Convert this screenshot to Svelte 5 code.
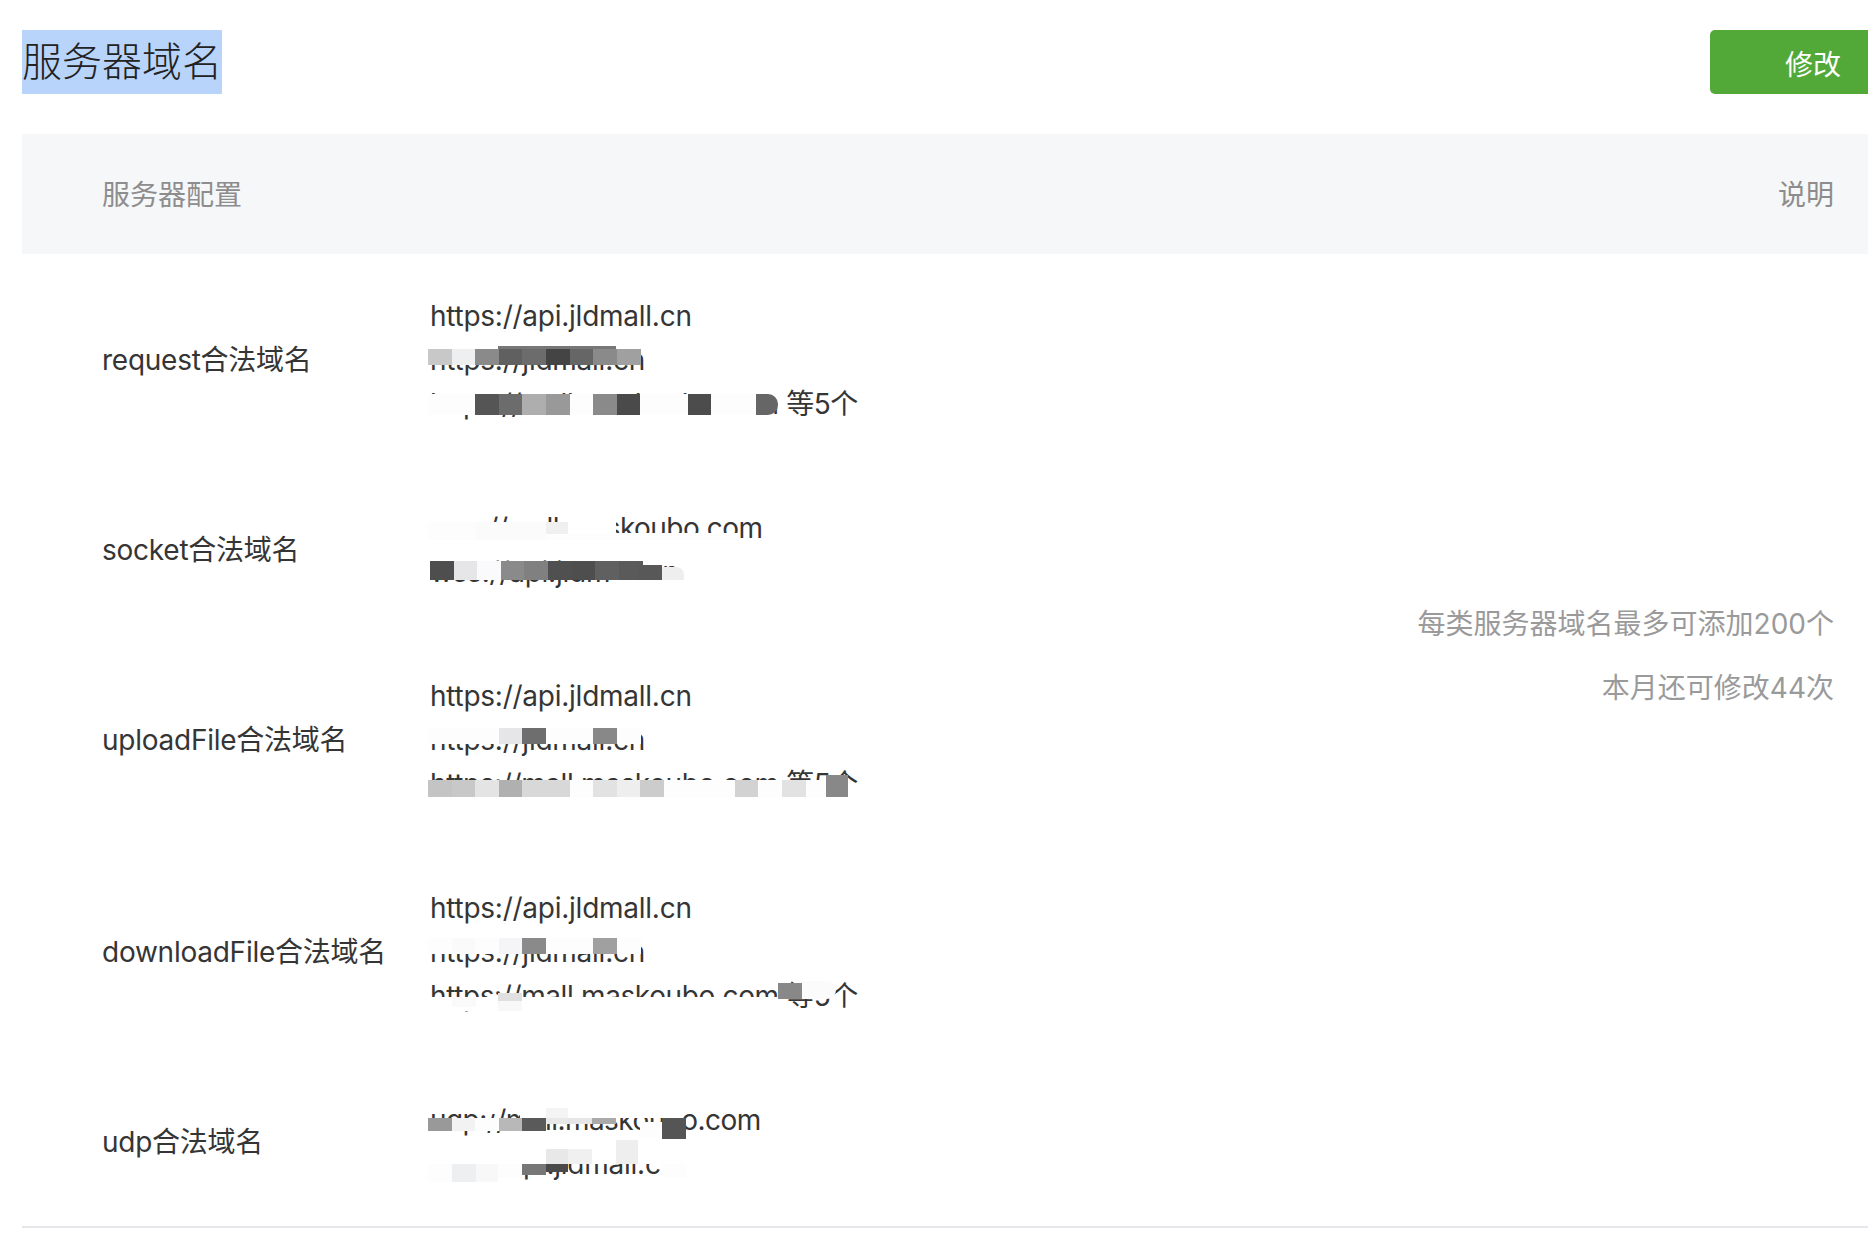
<script>
  const rows = [
    { name: 'request合法域名', urls: ['https://api.jldmall.cn', 'https://jldmall.cn', 'https://mall.maskoubo.com 等5个'] },
    { name: 'socket合法域名', urls: ['wss://mall.maskoubo.com', 'wss://api.jldmall.cn'] },
    { name: 'uploadFile合法域名', urls: ['https://api.jldmall.cn', 'https://jldmall.cn', 'https://mall.maskoubo.com 等5个'] },
    { name: 'downloadFile合法域名', urls: ['https://api.jldmall.cn', 'https://jldmall.cn', 'https://mall.maskoubo.com 等5个'] },
    { name: 'udp合法域名', urls: ['udp://mall.maskoubo.com', 'udp://api.jldmall.cn'] }
  ];

  // 打码色块: [x, y, w, h, color, radius]，整行色块用 strip 展开
  const W = '#fdfdfe';
  function strip(x, y, h, colors) {
    return colors.map((c, i) => [x + Math.round(i * 23.6), y, 24, h, c]);
  }

  const blocks = [
    // request
    ...strip(428, 349, 16, ['#c8c8c8', '#eeeff0', '#8a8a8a', '#606060', '#6c6c6c', '#444', '#666', '#8a8a8a', '#a0a0a0']),
    [498, 346, 118, 3, '#777'],
    ...strip(428, 394, 21, [W, W, '#555', '#6c6c6c', '#aeaeae', '#999', W, '#8a8a8a', '#4a4a4a', W, W, '#4c4c4c', W, W]),
    [756, 394, 22, 21, '#666', '0 10px 10px 0'],
    // socket
    [428, 522, 140, 18, W],
    [476, 522, 70, 18, '#fbfbfb'],
    [546, 522, 22, 12, '#f0f0f0'],
    [568, 518, 48, 18, '#fff'],
    [568, 533, 172, 12, W],
    [428, 540, 312, 6, '#fff'],
    ...strip(430, 561, 19, ['#4e4e4e', '#e6e6e8', '#fafafc', '#8a8a8a', '#808080', '#505050', '#4e4e4e', '#606060', '#5a5a5a']),
    [430, 561, 22, 19, '#4e4e4e', '8px 0 0 0'],
    [638, 565, 24, 15, '#585858'],
    [662, 567, 22, 13, '#eee', '0 8px 0 0'],
    [610, 580, 80, 10, '#fff'],
    // uploadFile
    ...strip(428, 728, 16, [W, W, W, '#e6e6e8', '#6e6e6e', W, W, '#888', W]),
    ...strip(428, 780, 17, ['#c4c4c4', '#c8c8c8', '#e4e4e4', '#b0b0b0', '#d8d8d8', '#d8d8d8', W, '#e2e2e2', '#eee', '#ccc', W, W, W, '#d2d2d2', W, '#e2e2e2', W]),
    [826, 775, 22, 22, '#888'],
    [428, 797, 420, 9, '#fff'],
    // downloadFile
    ...strip(428, 938, 16, [W, '#fafafa', W, '#f5f5f7', '#8a8a8a', W, W, '#a0a0a0', W]),
    [428, 997, 350, 14, '#fff'],
    [452, 997, 24, 10, '#fafafa'],
    [498, 993, 24, 8, '#e0e0e0'],
    [498, 1001, 24, 10, '#f8f8f8'],
    [778, 983, 24, 16, '#888'],
    [802, 981, 34, 18, '#fbfbfc', '0 9px 9px 0'],
    // udp
    [428, 1100, 70, 14, '#fff'],
    [520, 1100, 160, 18, '#fff'],
    ...strip(428, 1118, 13, ['#999', '#f2f2f3', W, '#b8b8b8', '#5a5a5a']),
    [546, 1118, 22, 6, '#e8e8e8'],
    [568, 1118, 24, 6, '#e6e6e6'],
    [592, 1118, 24, 6, '#aaa'],
    [546, 1108, 22, 10, '#f4f4f4'],
    [662, 1118, 24, 21, '#555'],
    [640, 1122, 22, 16, W],
    [428, 1140, 260, 24, '#fff'],
    [546, 1149, 22, 15, '#e8e8e8'],
    [568, 1149, 24, 15, '#f0f0f0'],
    [616, 1140, 22, 24, '#eee'],
    [428, 1164, 24, 18, W],
    [452, 1164, 24, 18, '#eeeff0'],
    [476, 1164, 22, 18, '#f8f8f9'],
    [498, 1164, 24, 14, W],
    [522, 1164, 24, 11, '#777'],
    [546, 1164, 22, 8, '#4a4a4a'],
    [662, 1164, 24, 14, W]
  ];
</script>

<div class="page">
  <div class="title-bar">
    <h2><span class="selected">服务器域名</span></h2>
    <button class="btn-edit">修改</button>
  </div>

  <table>
    <colgroup>
      <col class="w-name" />
      <col class="w-urls" />
      <col class="w-desc" />
    </colgroup>
    <thead>
      <tr>
        <th colspan="2">服务器配置</th>
        <th class="col-desc">说明</th>
      </tr>
    </thead>
    <tbody>
      {#each rows as row, i}
        <tr>
          <td class="col-name">{row.name}</td>
          <td class="col-urls">
            {#each row.urls as url}
              <div
                class:tight={url.includes('maskoubo')}
                class:tighter={url.includes('maskoubo') && !url.startsWith('https')}
              >{url}</div>
            {/each}
          </td>
          {#if i === 0}
            <td class="col-desc desc" rowspan="5">
              <p>每类服务器域名最多可添加200个</p>
              <p>本月还可修改44次</p>
            </td>
          {/if}
        </tr>
      {/each}
    </tbody>
  </table>

  {#each blocks as b}
    <i class="mosaic" style="left:{b[0]}px;top:{b[1]}px;width:{b[2]}px;height:{b[3]}px;background:{b[4]};border-radius:{b[5] || 0}"></i>
  {/each}
</div>

<style>
  :global(body) {
    background: #fff;
    overflow: hidden;
  }

  .page {
    position: relative;
    width: 1868px;
    height: 1248px;
    padding: 30px 0 0 22px;
    box-sizing: border-box;
    overflow: hidden;
    font-family: Inter, "Noto Sans CJK SC", sans-serif;
    font-size: 28px;
    color: #353535;
  }

  .title-bar {
    display: flex;
    justify-content: space-between;
    margin-bottom: 40px;
    height: 64px;
  }

  h2 {
    margin: 0;
    font-size: 40px;
    font-weight: 300;
    line-height: 64px;
    color: #222;
  }

  .selected { background: #b8d4fb; display: block; }

  .btn-edit {
    flex-shrink: 0;
    width: 206px;
    height: 64px;
    margin-right: -48px;
    padding-top: 2px;
    border: none;
    border-radius: 5px;
    background: #52a938;
    color: #fff;
    font: inherit;
  }

  table {
    width: 1846px;
    border-collapse: collapse;
    border-bottom: 2px solid #e7e7eb;
    table-layout: fixed;
  }

  .w-name { width: 408px; }
  .w-urls { width: 700px; }
  .w-desc { width: 738px; }

  th {
    height: 120px;
    padding: 0 0 2px 80px;
    box-sizing: border-box;
    background: #f6f7f9;
    color: #8d8d8d;
    font-weight: 400;
    text-align: left;
  }

  td { padding: 40px 0; line-height: 44px; letter-spacing: -0.25px; }

  .col-name { padding-left: 80px; }

  .tight { letter-spacing: -0.4px; }
  .tighter { letter-spacing: -0.55px; }

  th.col-desc, td.col-desc {
    padding-right: 34px;
    padding-left: 0;
    text-align: right;
    letter-spacing: 0;
  }

  td.desc {
    padding-top: 0;
    padding-bottom: 168px;
    color: #9a9a9a;
    vertical-align: middle;
  }

  .desc p { margin: 0; line-height: 64px; }

  .mosaic { position: absolute; display: block; }
</style>
